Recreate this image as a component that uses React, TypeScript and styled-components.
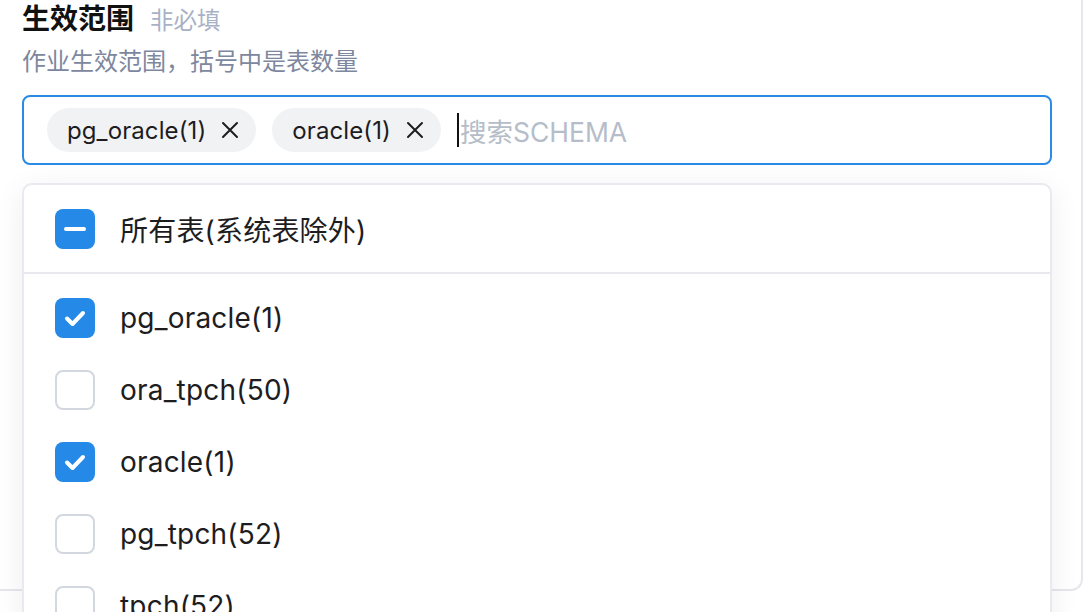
import React from "react";
import styled, { createGlobalStyle } from "styled-components";

interface Schema {
  name: string;
  count: number;
  checked: boolean;
}

const schemas: Schema[] = [
  { name: "pg_oracle", count: 1, checked: true },
  { name: "ora_tpch", count: 50, checked: false },
  { name: "oracle", count: 1, checked: true },
  { name: "pg_tpch", count: 52, checked: false },
  { name: "tpch", count: 52, checked: false },
];

const GlobalStyle = createGlobalStyle`
  html, body {
    margin: 0;
    padding: 0;
    background: #ffffff;
    font-family: Inter, "Noto Sans CJK SC", sans-serif;
    color: #1d1d1f;
    overflow: hidden;
  }
  * {
    box-sizing: border-box;
  }
`;

const Screen = styled.div`
  width: 1084px;
  height: 612px;
  overflow: hidden;
`;

const PageCard = styled.div`
  width: 1083px;
  height: 591px;
  padding: 0 29px 0 22px;
  border-right: 2px solid #e6e7ec;
  border-bottom: 2px solid #e6e7ec;
  border-bottom-right-radius: 12px;
  background: #ffffff;
`;

const TitleRow = styled.div`
  display: flex;
  align-items: baseline;
  gap: 16px;
  height: 38px;
  line-height: 38px;
`;

const Title = styled.span`
  font-size: 28px;
  font-weight: 600;
  color: #111111;
`;

const Optional = styled.span`
  font-size: 23.5px;
  color: #a9b1c6;
`;

const Description = styled.div`
  margin-top: 6px;
  font-size: 24px;
  line-height: 36px;
  color: #7d879e;
`;

const SelectWrap = styled.div`
  position: relative;
  margin-top: 15px;
`;

const InputBox = styled.div`
  display: flex;
  align-items: center;
  gap: 16px;
  height: 70px;
  padding: 0 23px;
  border: 2px solid #2a8be6;
  border-radius: 8px;
`;

const Chip = styled.span`
  display: inline-flex;
  align-items: center;
  gap: 15px;
  height: 44px;
  padding: 0 17px 0 20px;
  border-radius: 22px;
  background: #f1f2f4;
  font-size: 24px;
  letter-spacing: 0.1px;
  color: #1d1d1f;
`;

const Search = styled.span`
  display: flex;
  align-items: center;
  font-size: 26.5px;
  color: #b5bdc9;
`;

const Caret = styled.span`
  width: 2px;
  height: 34px;
  margin-right: 1px;
  background: #111111;
`;

const Dropdown = styled.div`
  position: absolute;
  top: calc(100% + 18px);
  left: 0;
  right: 0;
  height: 470px;
  background: #ffffff;
  border: 2px solid #e9eaef;
  border-radius: 10px;
  box-shadow: 0 6px 30px rgba(20, 30, 60, 0.07);
  overflow: hidden;
`;

const AllRow = styled.div`
  display: flex;
  align-items: center;
  gap: 25px;
  height: 89px;
  padding-left: 31px;
  border-bottom: 2px solid #e8e9ee;
`;

const List = styled.div`
  padding-top: 8px;
`;

const Option = styled.div`
  display: flex;
  align-items: center;
  gap: 25px;
  height: 72px;
  padding-left: 31px;
`;

const Label = styled.span`
  font-size: 28px;
  letter-spacing: 0.2px;
  color: #1d1d1f;
`;

const Box = styled.span<{ $on: boolean }>`
  display: inline-flex;
  align-items: center;
  justify-content: center;
  flex: none;
  width: 40px;
  height: 40px;
  border-radius: 8px;
  background: ${(p) => (p.$on ? "#2589e7" : "#ffffff")};
  border: ${(p) => (p.$on ? "none" : "2px solid #d3d8e0")};
`;

const CloseIcon = () => (
  <svg width="18" height="18" viewBox="0 0 18 18">
    <path
      d="M2 2 L16 16 M16 2 L2 16"
      stroke="#1d1d1f"
      strokeWidth="2"
      strokeLinecap="round"
    />
  </svg>
);

const CheckIcon = () => (
  <svg width="26" height="26" viewBox="0 0 26 26">
    <path
      d="M5 13.5 L10.5 19 L21 8"
      fill="none"
      stroke="#ffffff"
      strokeWidth="4"
      strokeLinecap="round"
      strokeLinejoin="round"
    />
  </svg>
);

const DashIcon = () => (
  <svg width="24" height="24" viewBox="0 0 24 24">
    <path d="M3 12 H21" stroke="#ffffff" strokeWidth="4" strokeLinecap="round" />
  </svg>
);

const App: React.FC = () => {
  const picked = schemas.filter((s) => s.checked);

  return (
    <Screen>
      <GlobalStyle />
      <PageCard>
        <TitleRow>
          <Title>生效范围</Title>
          <Optional>非必填</Optional>
        </TitleRow>
        <Description>作业生效范围，括号中是表数量</Description>
        <SelectWrap>
          <InputBox>
            {picked.map((s) => (
              <Chip key={s.name}>
                {s.name}({s.count})
                <CloseIcon />
              </Chip>
            ))}
            <Search>
              <Caret />
              搜索SCHEMA
            </Search>
          </InputBox>
          <Dropdown>
            <AllRow>
              <Box $on>
                <DashIcon />
              </Box>
              <Label>所有表(系统表除外)</Label>
            </AllRow>
            <List>
              {schemas.map((s) => (
                <Option key={s.name}>
                  <Box $on={s.checked}>{s.checked && <CheckIcon />}</Box>
                  <Label>
                    {s.name}({s.count})
                  </Label>
                </Option>
              ))}
            </List>
          </Dropdown>
        </SelectWrap>
      </PageCard>
    </Screen>
  );
};

export default App;
